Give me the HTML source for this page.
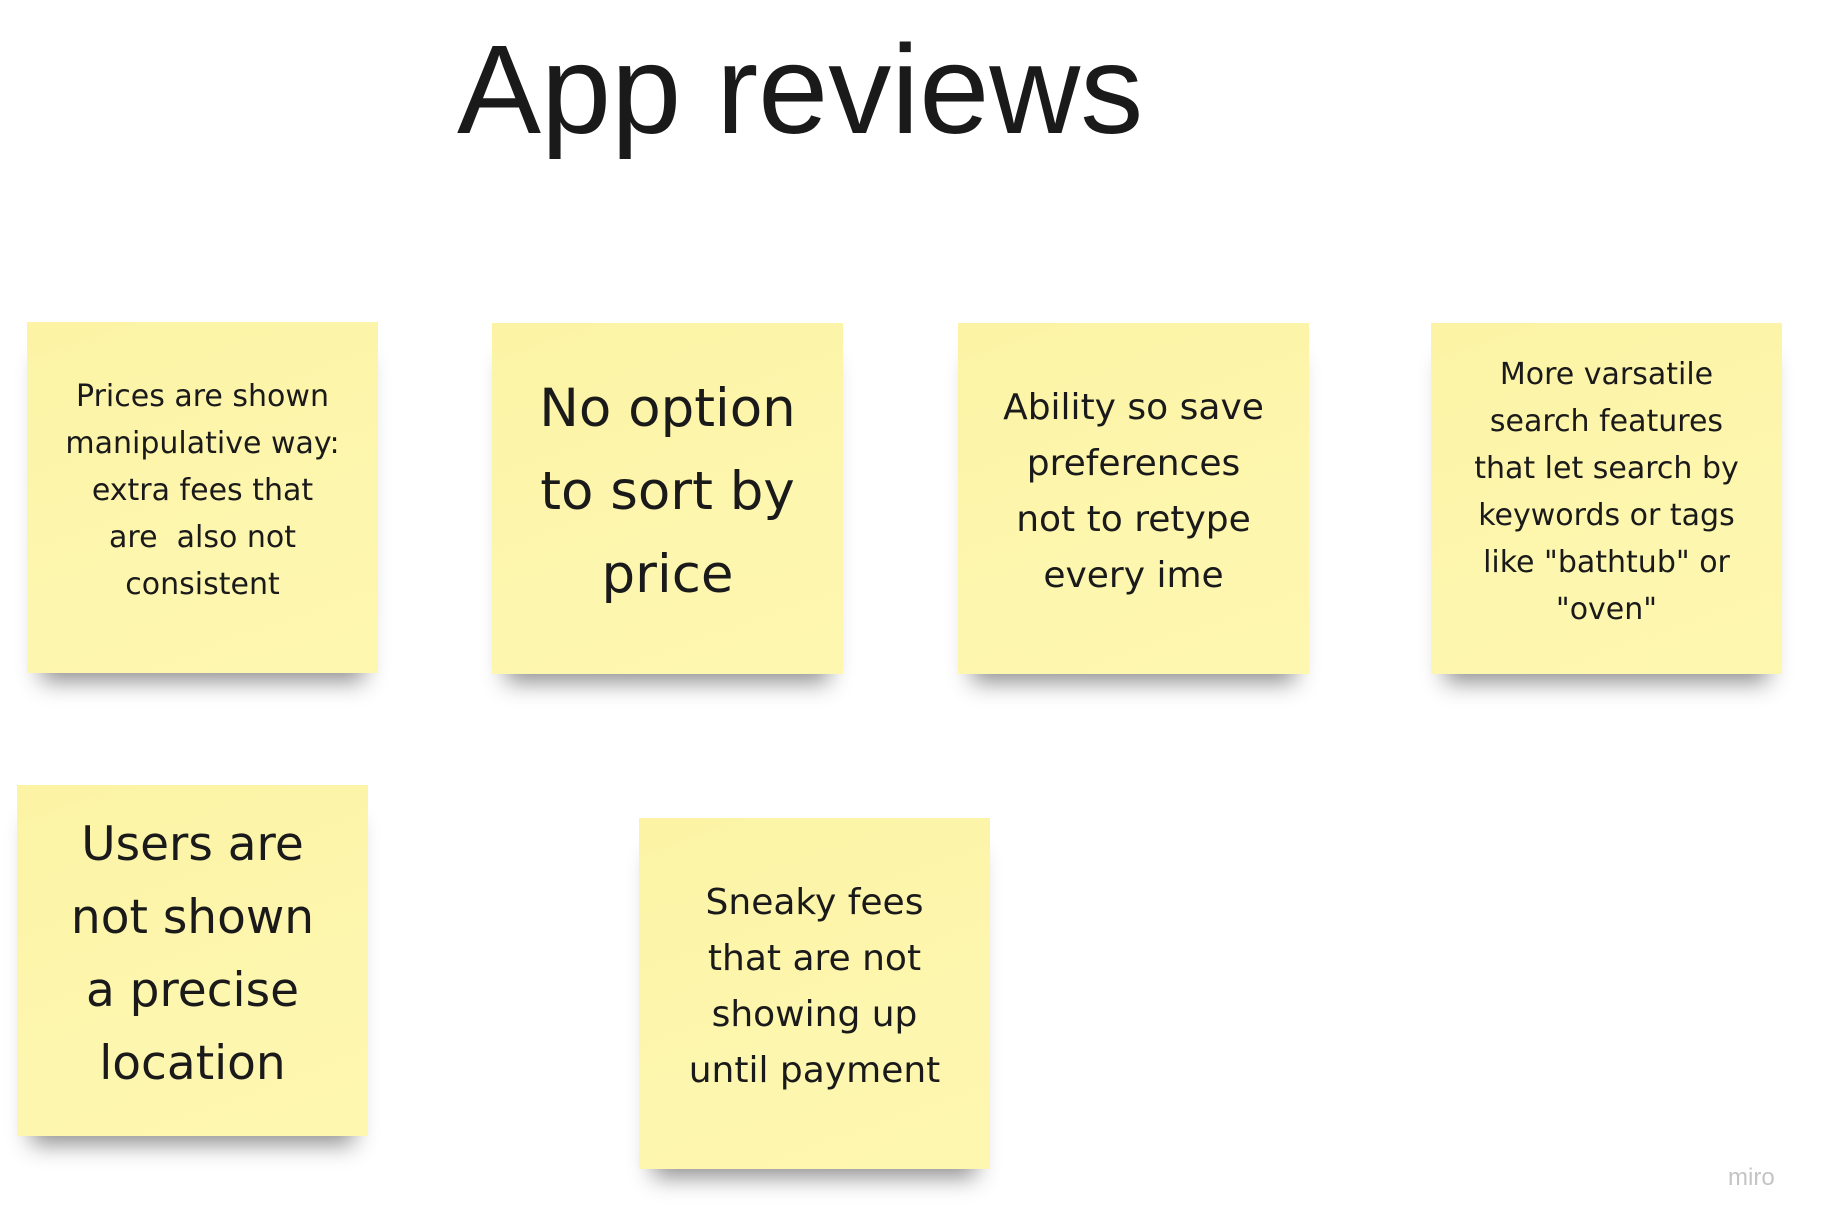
<!DOCTYPE html>
<html><head><meta charset="utf-8"><style>
html,body{margin:0;padding:0;background:#fff;}
body{width:1828px;height:1230px;position:relative;overflow:hidden;font-family:"DejaVu Sans","Liberation Sans",sans-serif;color:#1a1a1a;}
.t{position:absolute;left:457px;top:14px;font-size:126px;font-family:"Liberation Sans",sans-serif;letter-spacing:0px;white-space:nowrap;line-height:1.2;}
.n{position:absolute;width:351px;height:351px;box-sizing:border-box;padding-bottom:14px;background:linear-gradient(160deg,#fcf3a4 0%,#fdf6ae 60%,#fef7b0 100%);display:flex;align-items:center;justify-content:center;text-align:center;box-shadow:0 22px 22px -14px rgba(0,0,0,0.45);}
.n span{display:block;}
.m{position:absolute;left:1728px;top:1164px;font-size:24px;color:#c4c4c4;font-family:"Liberation Sans",sans-serif;}
</style></head><body>
<div class="t">App reviews</div>
<div class="n" style="left:27px;top:322px;font-size:30px;line-height:47px;"><span>Prices are shown<br>manipulative way:<br>extra fees that<br>are&nbsp; also not<br>consistent</span></div>
<div class="n" style="left:492px;top:323px;font-size:53px;line-height:83px;"><span>No option<br>to sort by<br>price</span></div>
<div class="n" style="left:958px;top:323px;font-size:36px;line-height:56px;"><span>Ability so save<br>preferences<br>not to retype<br>every ime</span></div>
<div class="n" style="left:1431px;top:323px;font-size:30px;line-height:47px;"><span>More varsatile<br>search features<br>that let search by<br>keywords or tags<br>like "bathtub" or<br>"oven"</span></div>
<div class="n" style="left:17px;top:785px;font-size:47px;line-height:73px;"><span>Users are<br>not shown<br>a precise<br>location</span></div>
<div class="n" style="left:639px;top:818px;font-size:36px;line-height:56px;"><span>Sneaky fees<br>that are not<br>showing up<br>until payment</span></div>
<div class="m">miro</div>
</body></html>
